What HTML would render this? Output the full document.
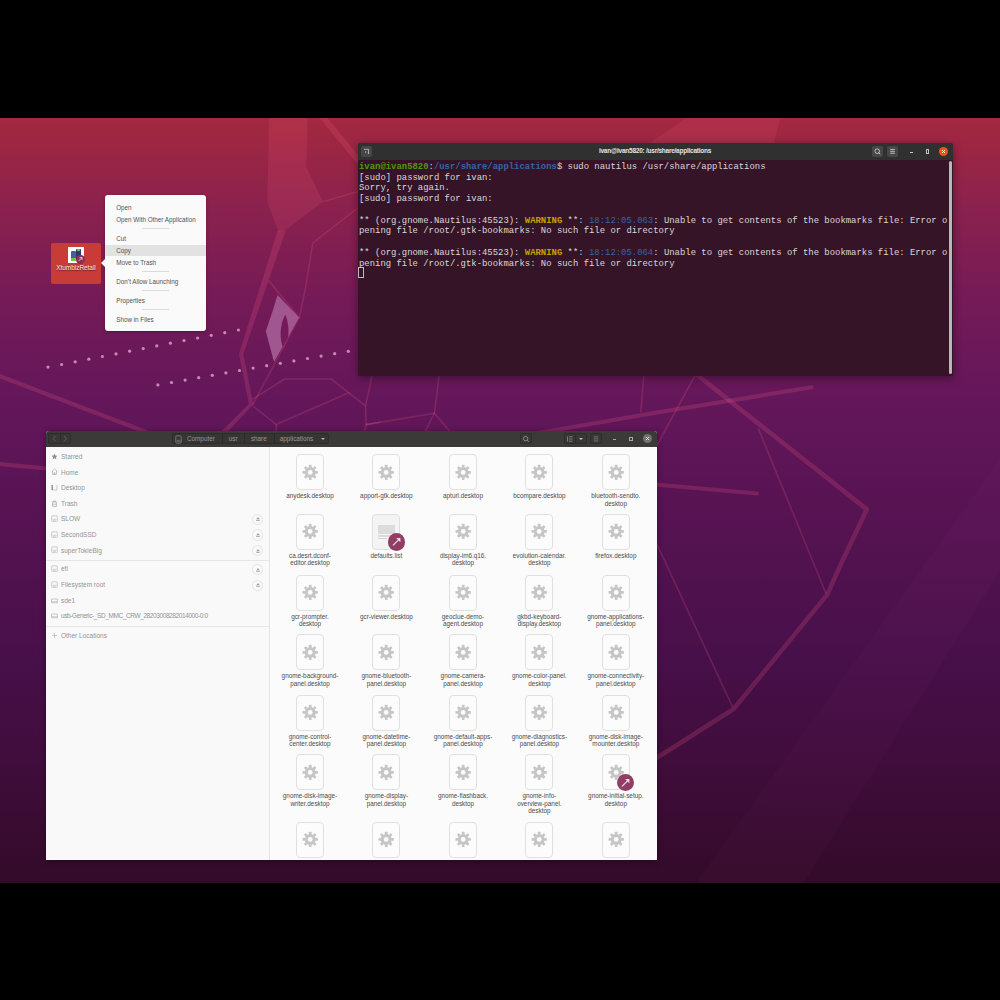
<!DOCTYPE html>
<html><head><meta charset="utf-8">
<style>
html,body{margin:0;padding:0;width:1000px;height:1000px;overflow:hidden;background:#000;}
*{box-sizing:border-box;}
body{font-family:"Liberation Sans",sans-serif;position:relative;}
.abs{position:absolute;}
#desk{position:absolute;left:0;top:118px;width:1000px;height:765px;overflow:hidden;
background:linear-gradient(180deg,#a4283f 0px,#8c224d 84px,#741a57 184px,#63175a 284px,#581353 384px,#48104a 534px,#440e43 584px,#400d3c 644px,#340b2a 754px,#330a29 765px);}
#wall{position:absolute;left:0;top:0;}
/* terminal */
#term{position:absolute;left:358px;top:143px;width:595px;height:233px;background:#361428;border-radius:3px 3px 0 0;overflow:hidden;box-shadow:0 2px 8px rgba(0,0,0,.4);}
#term .hb{position:absolute;left:0;top:0;width:595px;height:17px;background:#303030;}
#term pre{position:absolute;left:1px;top:19.0px;margin:0;font-family:"Liberation Mono",monospace;font-size:9.6px;line-height:10.73px;color:#d8d8d8;white-space:pre;transform:scaleX(0.929);transform-origin:0 0;}
.g{color:#4e9a06;font-weight:bold}.b{color:#3465a4;font-weight:bold}.y{color:#c4a000;font-weight:bold}.t{color:#3465a4}
/* context menu */
#menu{position:absolute;left:105px;top:195px;width:101px;height:136px;background:#fafafa;border-radius:3px;box-shadow:0 1px 3px rgba(0,0,0,.25);font-size:6.3px;color:#525252;}
#menu .it{position:absolute;left:11.2px;white-space:nowrap;}
#menu .sep{position:absolute;left:37px;width:27px;height:1px;background:#dcdcdc;}
/* fm */
#fm{position:absolute;left:46px;top:431px;width:611px;height:429px;background:#fbfbfb;border-radius:3px 3px 0 0;overflow:hidden;box-shadow:0 1px 6px rgba(0,0,0,.35);}
#fm .hb{position:absolute;left:0;top:0;width:611px;height:16px;background:#3c3a39;}
#side{position:absolute;left:0;top:16px;width:224px;height:413px;background:#f9f9f9;border-right:1px solid #e3e3e3;font-size:6.5px;color:#8a8a8a;}
.si{position:absolute;left:15px;white-space:nowrap;font-size:6.5px;line-height:8px;color:#939393;}
.lab{position:absolute;font-size:6.35px;line-height:7.2px;color:#4c4c4c;text-align:center;width:76px;}
.page{position:absolute;width:28px;height:36px;border:0.8px solid #e0e0e0;border-radius:4px;background:#fcfcfc;}
</style></head><body>
<div id="desk">
<svg id="wall" width="1000" height="765" viewBox="0 118 1000 765"><polygon points="1000.0,459.0 1000.0,571.0 803.0,884.0 695.0,884.0" fill="rgba(255,120,220,0.022)"/><polygon points="269.2,118.0 307.6,118.0 306.3,167.0 323.0,201.6 285.9,229.8 278.8,232.4 267.3,201.6" fill="rgba(240,90,120,0.17)"/><polygon points="686.0,118.0 780.0,118.0 774.0,143.0 650.0,143.0" fill="rgba(240,90,120,0.16)"/><polyline points="321.8,116.0 359.0,161.0" fill="none" stroke="rgba(240,90,120,0.2)" stroke-width="6.00" stroke-linejoin="round" stroke-linecap="round"/><polyline points="323.0,201.6 360.0,191.0" fill="none" stroke="rgba(243,90,134,0.21)" stroke-width="1.50" stroke-linejoin="round" stroke-linecap="round"/><polyline points="360.0,206.0 312.8,243.2 306.0,285.0 299.5,317.0" fill="none" stroke="rgba(243,90,134,0.21)" stroke-width="1.50" stroke-linejoin="round" stroke-linecap="round"/><polygon points="277.7,230.5 285.8,230.5 243.3,354.0 253.4,404.3 229.8,429.6 213.8,443.5 210.8,440.5 226.4,426.6 248.9,403.7 239.0,354.0" fill="rgba(243,90,134,0.21)"/><polygon points="277.5,294.9 299.1,317.4 274.0,362.0 265.8,331.2 273.0,310.0" fill="#a0568f"/><path d="M285.3,314.5 C279.5,325 279,340 284,350 C289.5,341 290,326 285.3,314.5 Z" fill="#731a5b"/><polyline points="268.8,280.8 299.1,317.4" fill="none" stroke="rgba(243,90,134,0.21)" stroke-width="1.60" stroke-linejoin="round" stroke-linecap="round"/><polyline points="299.1,317.4 271.4,370.0 253.0,404.0" fill="none" stroke="rgba(243,90,134,0.21)" stroke-width="1.60" stroke-linejoin="round" stroke-linecap="round"/><polyline points="253.0,399.0 284.6,379.0 331.4,379.0 348.8,392.8 365.6,406.0 372.2,375.0" fill="none" stroke="rgba(243,90,134,0.21)" stroke-width="1.60" stroke-linejoin="round" stroke-linecap="round"/><polyline points="253.0,406.0 276.2,424.6 348.8,392.8" fill="none" stroke="rgba(243,90,134,0.21)" stroke-width="1.60" stroke-linejoin="round" stroke-linecap="round"/><polyline points="276.2,424.6 276.2,432.0" fill="none" stroke="rgba(243,90,134,0.21)" stroke-width="1.60" stroke-linejoin="round" stroke-linecap="round"/><polyline points="365.6,406.0 366.2,424.6 380.0,422.2" fill="none" stroke="rgba(243,90,134,0.21)" stroke-width="1.60" stroke-linejoin="round" stroke-linecap="round"/><polyline points="366.2,424.6 364.4,432.0" fill="none" stroke="rgba(243,90,134,0.21)" stroke-width="1.60" stroke-linejoin="round" stroke-linecap="round"/><polyline points="366.2,424.6 434.4,413.2 439.2,375.0" fill="none" stroke="rgba(243,90,134,0.21)" stroke-width="1.60" stroke-linejoin="round" stroke-linecap="round"/><polyline points="434.4,413.2 424.8,432.0" fill="none" stroke="rgba(243,90,134,0.21)" stroke-width="1.60" stroke-linejoin="round" stroke-linecap="round"/><polyline points="434.4,413.2 450.4,432.0" fill="none" stroke="rgba(243,90,134,0.21)" stroke-width="1.60" stroke-linejoin="round" stroke-linecap="round"/><polyline points="644.0,375.0 640.8,411.6" fill="none" stroke="rgba(243,90,134,0.21)" stroke-width="1.60" stroke-linejoin="round" stroke-linecap="round"/><polyline points="538.4,433.0 660.0,412.0 811.6,387.3" fill="none" stroke="rgba(243,90,134,0.21)" stroke-width="4.20" stroke-linejoin="round" stroke-linecap="round"/><polyline points="-2.0,375.5 146.0,432.0" fill="none" stroke="rgba(243,90,134,0.21)" stroke-width="4.20" stroke-linejoin="round" stroke-linecap="round"/><polyline points="-2.0,464.0 47.0,468.5" fill="none" stroke="rgba(243,90,134,0.21)" stroke-width="4.20" stroke-linejoin="round" stroke-linecap="round"/><polyline points="695.9,374.0 866.8,509.4 842.8,560.0 827.2,594.6 733.6,709.0 655.0,759.0" fill="none" stroke="rgba(243,90,134,0.21)" stroke-width="4.60" stroke-linejoin="round" stroke-linecap="round"/><polyline points="695.9,374.0 656.0,447.0" fill="none" stroke="rgba(243,90,134,0.21)" stroke-width="1.60" stroke-linejoin="round" stroke-linecap="round"/><polyline points="758.3,428.5 825.9,593.3" fill="none" stroke="rgba(243,90,134,0.21)" stroke-width="1.60" stroke-linejoin="round" stroke-linecap="round"/><polyline points="655.0,540.0 732.3,706.4" fill="none" stroke="rgba(243,90,134,0.21)" stroke-width="1.60" stroke-linejoin="round" stroke-linecap="round"/><polyline points="655.0,484.4 757.0,493.5" fill="none" stroke="rgba(243,90,134,0.21)" stroke-width="4.00" stroke-linejoin="round" stroke-linecap="round"/><circle cx="48.0" cy="367.1" r="1.6" fill="#c68ab6"/><circle cx="61.6" cy="364.5" r="1.6" fill="#c68ab6"/><circle cx="75.2" cy="361.8" r="1.6" fill="#c68ab6"/><circle cx="88.8" cy="359.2" r="1.6" fill="#c68ab6"/><circle cx="102.4" cy="356.5" r="1.6" fill="#c68ab6"/><circle cx="116.0" cy="353.9" r="1.6" fill="#c68ab6"/><circle cx="129.6" cy="351.2" r="1.6" fill="#c68ab6"/><circle cx="143.2" cy="348.6" r="1.6" fill="#c68ab6"/><circle cx="156.8" cy="345.9" r="1.6" fill="#c68ab6"/><circle cx="170.4" cy="343.2" r="1.6" fill="#c68ab6"/><circle cx="184.0" cy="340.6" r="1.6" fill="#c68ab6"/><circle cx="197.6" cy="338.0" r="1.6" fill="#c68ab6"/><circle cx="211.2" cy="335.3" r="1.6" fill="#c68ab6"/><circle cx="224.8" cy="332.7" r="1.6" fill="#c68ab6"/><circle cx="238.4" cy="330.0" r="1.6" fill="#c68ab6"/><circle cx="157.9" cy="384.9" r="1.6" fill="#c68ab6"/><circle cx="171.5" cy="382.5" r="1.6" fill="#c68ab6"/><circle cx="185.1" cy="380.1" r="1.6" fill="#c68ab6"/><circle cx="198.7" cy="377.7" r="1.6" fill="#c68ab6"/><circle cx="212.3" cy="375.3" r="1.6" fill="#c68ab6"/><circle cx="225.9" cy="372.9" r="1.6" fill="#c68ab6"/><circle cx="239.5" cy="370.5" r="1.6" fill="#c68ab6"/><circle cx="253.1" cy="368.1" r="1.6" fill="#c68ab6"/><circle cx="266.7" cy="365.7" r="1.6" fill="#c68ab6"/><circle cx="280.3" cy="363.3" r="1.6" fill="#c68ab6"/><circle cx="293.9" cy="360.9" r="1.6" fill="#c68ab6"/><circle cx="307.5" cy="358.5" r="1.6" fill="#c68ab6"/><circle cx="321.1" cy="356.1" r="1.6" fill="#c68ab6"/><circle cx="334.7" cy="353.7" r="1.6" fill="#c68ab6"/><circle cx="348.3" cy="351.3" r="1.6" fill="#c68ab6"/></svg>
</div>

<!-- terminal -->
<div id="term">
<div class="hb">
  <div class="abs" style="left:3px;top:3px;width:11px;height:11px;border-radius:2px;background:#474747;"></div>
  <svg class="abs" style="left:3px;top:3px" width="11" height="11" viewBox="0 0 11 11"><path d="M3 3.3 H7.5 V7.6" stroke="#c8c8c8" stroke-width="0.8" fill="none"/><path d="M7.5 8 L6.7 6.8 H8.3 Z" fill="#c8c8c8"/><path d="M4.2 5 L5.6 6 L4.2 7 Z" fill="#bdbdbd"/></svg>
  <div class="abs" style="left:240px;top:4.4px;width:114px;text-align:center;font-size:6.5px;font-weight:bold;color:#e4e4e4;white-space:nowrap;letter-spacing:-0.25px;">ivan@ivan5820: /usr/share/applications</div>
  <div class="abs" style="left:514px;top:3px;width:11px;height:11px;border-radius:2px;background:#474747;"></div>
  <svg class="abs" style="left:514px;top:3px" width="11" height="11" viewBox="0 0 11 11"><circle cx="5.2" cy="5.2" r="2.3" stroke="#c8c8c8" stroke-width="0.9" fill="none"/><path d="M6.8 6.8 L8.3 8.3" stroke="#c8c8c8" stroke-width="1"/></svg>
  <div class="abs" style="left:529px;top:3px;width:11px;height:11px;border-radius:2px;background:#474747;"></div>
  <svg class="abs" style="left:529px;top:3px" width="11" height="11" viewBox="0 0 11 11"><path d="M3.2 3.4 H7.8 M3.2 5.3 H7.8 M3.2 7.2 H7.8" stroke="#c0c0c0" stroke-width="1"/></svg>
  <div class="abs" style="left:551.5px;top:9px;width:3.5px;height:0.9px;background:#d0d0d0;"></div>
  <div class="abs" style="left:567.5px;top:6.3px;width:3.8px;height:4.4px;border:0.8px solid #c8c8c8;border-radius:0.6px;"></div>
  <div class="abs" style="left:581px;top:4px;width:9px;height:9px;border-radius:50%;background:#e95420;"></div>
  <svg class="abs" style="left:581px;top:4px" width="9" height="9" viewBox="0 0 9 9"><path d="M3 3 L6 6 M6 3 L3 6" stroke="#fff" stroke-width="0.9"/></svg>
 </div>
 <div class="abs" style="left:591px;top:18px;width:2.5px;height:213px;border-radius:1.5px;background:#b8b8b8;"></div>
 <div class="abs" style="left:0.3px;top:124.2px;width:6px;height:11px;border:0.9px solid #bdbdbd;"></div>
<pre><span class="g">ivan@ivan5820</span>:<span class="b">/usr/share/applications</span>$ sudo nautilus /usr/share/applications
[sudo] password for ivan:
Sorry, try again.
[sudo] password for ivan:

** (org.gnome.Nautilus:45523): <span class="y">WARNING</span> **: <span class="t">18:12:05.063</span>: Unable to get contents of the bookmarks file: Error o
pening file /root/.gtk-bookmarks: No such file or directory

** (org.gnome.Nautilus:45523): <span class="y">WARNING</span> **: <span class="t">18:12:05.064</span>: Unable to get contents of the bookmarks file: Error o
pening file /root/.gtk-bookmarks: No such file or directory
</pre>
</div>

<!-- desktop icon -->
<div class="abs" style="left:51px;top:243px;width:50px;height:41px;background:#c93b37;border-radius:2px;">
 <div class="abs" style="left:16.5px;top:4px;width:16px;height:15.5px;background:#fff;"></div>
 <div class="abs" style="left:20px;top:8px;width:5px;height:9px;background:#4a5aa8;border-radius:1px 1px 0 0;"></div>
 <div class="abs" style="left:20px;top:15px;width:5px;height:2.5px;background:#6fc24a;"></div>
 <div class="abs" style="left:25px;top:6px;width:4.5px;height:11px;background:#2d3a6a;border-radius:1px 1px 0 0;"></div>
 <div class="abs" style="left:25.5px;top:6px;width:3.5px;height:2px;background:#5ac34a;"></div>
 <div class="abs" style="left:25.4px;top:12.3px;width:8.6px;height:8.6px;border-radius:50%;background:#8c2f58;"><svg class="abs" style="left:0;top:0" width="8.6" height="8.6" viewBox="0 0 10 10"><path d="M3 7 L7 3 M4 3 H7 V6" stroke="#e8d0dc" stroke-width="1" fill="none"/></svg></div>
 <div class="abs" style="left:0;top:21.4px;width:50px;text-align:center;font-size:6.5px;color:#f4ecec;letter-spacing:-0.05px;text-shadow:0 0.5px 1px rgba(0,0,0,.6);white-space:nowrap;">XtumbizRetail</div>
</div>

<!-- context menu -->
<div id="menu">
 <div class="it" style="top:8.7px">Open</div>
 <div class="it" style="top:20.7px">Open With Other Application</div>
 <div class="sep" style="top:32.7px"></div>
 <div class="abs" style="left:0;top:49.5px;width:101px;height:11.5px;background:#e2e2e2"></div>
 <div class="it" style="top:39.7px">Cut</div>
 <div class="it" style="top:51.7px">Copy</div>
 <div class="it" style="top:63.7px">Move to Trash</div>
 <div class="sep" style="top:75.7px"></div>
 <div class="it" style="top:82.5px">Don’t Allow Launching</div>
 <div class="sep" style="top:94.7px"></div>
 <div class="it" style="top:101.5px">Properties</div>
 <div class="sep" style="top:114.4px"></div>
 <div class="it" style="top:121.0px">Show in Files</div>
 <div class="abs" style="left:-4px;top:64px;width:0;height:0;border-top:4px solid transparent;border-bottom:4px solid transparent;border-right:4px solid #fafafa"></div>
</div>

<!-- file manager -->
<div id="fm">
<div class="hb">
<div class="abs" style="left:2.4px;top:2px;width:22.8px;height:11.2px;border:1px solid #2f2d2c;border-radius:2px;background:#393735;"></div>
<div class="abs" style="left:14px;top:2.5px;width:1px;height:10.2px;background:#2f2d2c;"></div>
<svg class="abs" style="left:2.4px;top:2px" width="23" height="11" viewBox="0 0 23 11"><path d="M7.3 3 L5.3 5.6 L7.3 8.2 M16.3 3 L18.3 5.6 L16.3 8.2" stroke="#6a6765" stroke-width="0.8" fill="none"/></svg>
<div class="abs" style="left:125.5px;top:1.8px;width:157.5px;height:11.4px;border:1px solid #2f2d2c;border-radius:2px;background:#373533;"></div>
<div class="abs" style="left:176.0px;top:2.3px;width:1px;height:10.4px;background:#2c2a29;"></div>
<div class="abs" style="left:198.0px;top:2.3px;width:1px;height:10.4px;background:#2c2a29;"></div>
<div class="abs" style="left:227.8px;top:2.3px;width:1px;height:10.4px;background:#2c2a29;"></div>
<svg class="abs" style="left:128.5px;top:3.5px" width="7" height="9" viewBox="0 0 7 9"><rect x="0.8" y="0.8" width="5.4" height="7.4" rx="1" stroke="#8e8b89" stroke-width="0.7" fill="none"/><path d="M1.6 5.3 H5.4 M1.6 6.7 H5.4" stroke="#8e8b89" stroke-width="0.6"/></svg>
<div class="abs" style="font-size:6.33px;color:#9a9795;white-space:nowrap;top:4.3px;left:141.0px">Computer</div>
<div class="abs" style="font-size:6.33px;color:#9a9795;white-space:nowrap;top:4.3px;left:182.8px">usr</div>
<div class="abs" style="font-size:6.33px;color:#9a9795;white-space:nowrap;top:4.3px;left:204.9px">share</div>
<div class="abs" style="font-size:6.33px;color:#9a9795;white-space:nowrap;top:4.3px;left:233.8px">applications</div>
<div class="abs" style="left:274.9px;top:6.5px;width:0;height:0;border-left:2.3px solid transparent;border-right:2.3px solid transparent;border-top:2.5px solid #b9b6b4;"></div>
<div class="abs" style="left:473.7px;top:1.5px;width:12px;height:11.7px;border:1px solid #2f2d2c;border-radius:2px;background:#393735;"></div>
<svg class="abs" style="left:473.7px;top:1.5px" width="12" height="12" viewBox="0 0 12 12"><circle cx="5.6" cy="5.6" r="2.2" stroke="#8f8c8a" stroke-width="0.9" fill="none"/><path d="M7.2 7.2 L8.8 8.8" stroke="#8f8c8a" stroke-width="1"/></svg>
<div class="abs" style="left:518.0px;top:1.5px;width:23.2px;height:11.7px;border:1px solid #2f2d2c;border-radius:2px;background:#393735;"></div>
<div class="abs" style="left:529.2px;top:2px;width:1px;height:10.7px;background:#2f2d2c;"></div>
<svg class="abs" style="left:518.0px;top:1.5px" width="12" height="12" viewBox="0 0 12 12"><path d="M3.5 3.5 V8.5 M5 3.8 H8.5 M5 6 H8.5 M5 8.2 H8.5" stroke="#8f8c8a" stroke-width="0.8"/></svg>
<div class="abs" style="left:533.1px;top:6.5px;width:0;height:0;border-left:2.3px solid transparent;border-right:2.3px solid transparent;border-top:2.5px solid #c4c1bf;"></div>
<div class="abs" style="left:544.2px;top:1.5px;width:12px;height:11.7px;border:1px solid #2f2d2c;border-radius:2px;background:#393735;"></div>
<svg class="abs" style="left:544.2px;top:1.5px" width="12" height="12" viewBox="0 0 12 12"><path d="M3.8 3.9 H8.2 M3.8 5.9 H8.2 M3.8 7.9 H8.2" stroke="#8f8c8a" stroke-width="0.7"/></svg>
<div class="abs" style="left:566.7px;top:8px;width:3px;height:0.9px;background:#a9a6a4;"></div>
<div class="abs" style="left:582.6px;top:5.5px;width:4.2px;height:4.2px;border:0.8px solid #a9a6a4;"></div>
<div class="abs" style="left:596.7px;top:3.0px;width:9px;height:9px;border-radius:50%;background:#74716f;"></div>
<svg class="abs" style="left:596.7px;top:3.0px" width="9" height="9" viewBox="0 0 9 9"><path d="M3 3 L6 6 M6 3 L3 6" stroke="#e6e4e2" stroke-width="0.9"/></svg>
</div>
<div id="side"></div>
<div class="si" style="top:21.90px">Starred</div>
<svg class="abs" style="left:5.0px;top:21.70px" width="7" height="7" viewBox="0 0 7 7"><path d="M3.5 0.6 L4.4 2.6 L6.5 2.8 L4.9 4.2 L5.4 6.3 L3.5 5.2 L1.6 6.3 L2.1 4.2 L0.5 2.8 L2.6 2.6 Z" fill="#8f8f8f"/></svg>
<div class="si" style="top:37.50px">Home</div>
<svg class="abs" style="left:5.0px;top:37.30px" width="7" height="7" viewBox="0 0 7 7"><path d="M0.8 3.5 L3.5 0.9 L6.2 3.5 M1.5 3 V6.4 H5.5 V3 M3 6.4 V4.8 H4 V6.4" stroke="#a0a0a0" stroke-width="0.6" fill="none"/></svg>
<div class="si" style="top:53.10px">Desktop</div>
<svg class="abs" style="left:5.0px;top:52.90px" width="7" height="7" viewBox="0 0 7 7"><path d="M1 1 V6 H6 V1" stroke="#a8a8a8" stroke-width="0.6" fill="none"/><rect x="0.6" y="1" width="1.2" height="5" fill="#8a8a8a"/></svg>
<div class="si" style="top:68.70px">Trash</div>
<svg class="abs" style="left:5.0px;top:68.50px" width="7" height="7" viewBox="0 0 7 7"><path d="M1.2 2 H5.8 M2.5 2 V1 H4.5 V2 M1.6 2.3 V6.5 H5.4 V2.3 M1.6 4.2 H5.4" stroke="#9a9a9a" stroke-width="0.6" fill="none"/></svg>
<div class="si" style="top:84.30px">SLOW</div>
<svg class="abs" style="left:5.0px;top:84.10px" width="7" height="7" viewBox="0 0 7 7"><rect x="0.7" y="0.8" width="5.6" height="5.8" rx="0.8" stroke="#b0b0b0" stroke-width="0.6" fill="none"/><path d="M1.3 4.3 H5.7 M2 5.4 H5" stroke="#b0b0b0" stroke-width="0.5"/></svg>
<div class="abs" style="left:205.9px;top:82.7px;width:11.4px;height:11.4px;border-radius:50%;border:0.7px solid #e4e4e4;background:#fafafa;"></div>
<svg class="abs" style="left:208.6px;top:85.4px" width="6" height="6" viewBox="0 0 6 6"><path d="M3 0.9 L4.8 3.3 H1.2 Z" fill="#a0a0a0"/><rect x="1.2" y="3.9" width="3.6" height="0.9" fill="#a0a0a0"/></svg>
<div class="si" style="top:99.90px">SecondSSD</div>
<svg class="abs" style="left:5.0px;top:99.70px" width="7" height="7" viewBox="0 0 7 7"><rect x="0.7" y="0.8" width="5.6" height="5.8" rx="0.8" stroke="#b0b0b0" stroke-width="0.6" fill="none"/><path d="M1.3 4.3 H5.7 M2 5.4 H5" stroke="#b0b0b0" stroke-width="0.5"/></svg>
<div class="abs" style="left:205.9px;top:98.3px;width:11.4px;height:11.4px;border-radius:50%;border:0.7px solid #e4e4e4;background:#fafafa;"></div>
<svg class="abs" style="left:208.6px;top:101.0px" width="6" height="6" viewBox="0 0 6 6"><path d="M3 0.9 L4.8 3.3 H1.2 Z" fill="#a0a0a0"/><rect x="1.2" y="3.9" width="3.6" height="0.9" fill="#a0a0a0"/></svg>
<div class="si" style="top:115.50px">superTokieBig</div>
<svg class="abs" style="left:5.0px;top:115.30px" width="7" height="7" viewBox="0 0 7 7"><rect x="0.7" y="0.8" width="5.6" height="5.8" rx="0.8" stroke="#b0b0b0" stroke-width="0.6" fill="none"/><path d="M1.3 4.3 H5.7 M2 5.4 H5" stroke="#b0b0b0" stroke-width="0.5"/></svg>
<div class="abs" style="left:205.9px;top:113.9px;width:11.4px;height:11.4px;border-radius:50%;border:0.7px solid #e4e4e4;background:#fafafa;"></div>
<svg class="abs" style="left:208.6px;top:116.6px" width="6" height="6" viewBox="0 0 6 6"><path d="M3 0.9 L4.8 3.3 H1.2 Z" fill="#a0a0a0"/><rect x="1.2" y="3.9" width="3.6" height="0.9" fill="#a0a0a0"/></svg>
<div class="si" style="top:134.40px">efi</div>
<svg class="abs" style="left:5.0px;top:134.20px" width="7" height="7" viewBox="0 0 7 7"><rect x="0.7" y="0.8" width="5.6" height="5.8" rx="0.8" stroke="#b0b0b0" stroke-width="0.6" fill="none"/><path d="M1.3 4.3 H5.7 M2 5.4 H5" stroke="#b0b0b0" stroke-width="0.5"/></svg>
<div class="abs" style="left:205.9px;top:132.8px;width:11.4px;height:11.4px;border-radius:50%;border:0.7px solid #e4e4e4;background:#fafafa;"></div>
<svg class="abs" style="left:208.6px;top:135.5px" width="6" height="6" viewBox="0 0 6 6"><path d="M3 0.9 L4.8 3.3 H1.2 Z" fill="#a0a0a0"/><rect x="1.2" y="3.9" width="3.6" height="0.9" fill="#a0a0a0"/></svg>
<div class="si" style="top:150.20px">Filesystem root</div>
<svg class="abs" style="left:5.0px;top:150.00px" width="7" height="7" viewBox="0 0 7 7"><rect x="0.7" y="0.8" width="5.6" height="5.8" rx="0.8" stroke="#b0b0b0" stroke-width="0.6" fill="none"/><path d="M1.3 4.3 H5.7 M2 5.4 H5" stroke="#b0b0b0" stroke-width="0.5"/></svg>
<div class="abs" style="left:205.9px;top:148.6px;width:11.4px;height:11.4px;border-radius:50%;border:0.7px solid #e4e4e4;background:#fafafa;"></div>
<svg class="abs" style="left:208.6px;top:151.3px" width="6" height="6" viewBox="0 0 6 6"><path d="M3 0.9 L4.8 3.3 H1.2 Z" fill="#a0a0a0"/><rect x="1.2" y="3.9" width="3.6" height="0.9" fill="#a0a0a0"/></svg>
<div class="si" style="top:165.80px">sde1</div>
<svg class="abs" style="left:5.0px;top:165.60px" width="7" height="7" viewBox="0 0 7 7"><path d="M0.6 2 H6.4 V5.8 H0.6 Z M0.6 4.8 H6.4" stroke="#a8a8a8" stroke-width="0.6" fill="none"/></svg>
<div class="si" style="top:181.30px;letter-spacing:-0.4px">usb-Generic-_SD_MMC_CRW_28203008282014000-0:0</div>
<svg class="abs" style="left:5.0px;top:181.10px" width="7" height="7" viewBox="0 0 7 7"><path d="M0.6 2 H6.4 V5.8 H0.6 Z M0.6 4.8 H6.4" stroke="#a8a8a8" stroke-width="0.6" fill="none"/></svg>
<div class="si" style="top:201.10px">Other Locations</div>
<svg class="abs" style="left:5.0px;top:200.90px" width="7" height="7" viewBox="0 0 7 7"><path d="M3.5 1 V6 M1 3.5 H6" stroke="#a8a8a8" stroke-width="0.6"/></svg>
<div class="abs" style="left:0;top:129.2px;width:224px;height:1px;background:#e6e6e6;"></div>
<div class="abs" style="left:0;top:195.2px;width:224px;height:1px;background:#e6e6e6;"></div>
<div class="page" style="left:249.8px;top:23.3px"><svg class="abs" style="left:-0.8px;top:-0.8px" width="28" height="35" viewBox="0 0 28 35"><g transform="translate(14.2,17.4)" fill="#c6c6c6"><circle r="5.4"/><rect x="-1.35" y="-7.7" width="2.7" height="4" rx="0.6" transform="rotate(0)"/><rect x="-1.35" y="-7.7" width="2.7" height="4" rx="0.6" transform="rotate(45)"/><rect x="-1.35" y="-7.7" width="2.7" height="4" rx="0.6" transform="rotate(90)"/><rect x="-1.35" y="-7.7" width="2.7" height="4" rx="0.6" transform="rotate(135)"/><rect x="-1.35" y="-7.7" width="2.7" height="4" rx="0.6" transform="rotate(180)"/><rect x="-1.35" y="-7.7" width="2.7" height="4" rx="0.6" transform="rotate(225)"/><rect x="-1.35" y="-7.7" width="2.7" height="4" rx="0.6" transform="rotate(270)"/><rect x="-1.35" y="-7.7" width="2.7" height="4" rx="0.6" transform="rotate(315)"/><circle r="2.4" fill="#fcfcfc"/></g></svg></div>
<div class="lab" style="left:226.0px;top:61.3px">anydesk.desktop</div>
<div class="page" style="left:326.2px;top:23.3px"><svg class="abs" style="left:-0.8px;top:-0.8px" width="28" height="35" viewBox="0 0 28 35"><g transform="translate(14.2,17.4)" fill="#c6c6c6"><circle r="5.4"/><rect x="-1.35" y="-7.7" width="2.7" height="4" rx="0.6" transform="rotate(0)"/><rect x="-1.35" y="-7.7" width="2.7" height="4" rx="0.6" transform="rotate(45)"/><rect x="-1.35" y="-7.7" width="2.7" height="4" rx="0.6" transform="rotate(90)"/><rect x="-1.35" y="-7.7" width="2.7" height="4" rx="0.6" transform="rotate(135)"/><rect x="-1.35" y="-7.7" width="2.7" height="4" rx="0.6" transform="rotate(180)"/><rect x="-1.35" y="-7.7" width="2.7" height="4" rx="0.6" transform="rotate(225)"/><rect x="-1.35" y="-7.7" width="2.7" height="4" rx="0.6" transform="rotate(270)"/><rect x="-1.35" y="-7.7" width="2.7" height="4" rx="0.6" transform="rotate(315)"/><circle r="2.4" fill="#fcfcfc"/></g></svg></div>
<div class="lab" style="left:302.4px;top:61.3px">apport-gtk.desktop</div>
<div class="page" style="left:402.8px;top:23.3px"><svg class="abs" style="left:-0.8px;top:-0.8px" width="28" height="35" viewBox="0 0 28 35"><g transform="translate(14.2,17.4)" fill="#c6c6c6"><circle r="5.4"/><rect x="-1.35" y="-7.7" width="2.7" height="4" rx="0.6" transform="rotate(0)"/><rect x="-1.35" y="-7.7" width="2.7" height="4" rx="0.6" transform="rotate(45)"/><rect x="-1.35" y="-7.7" width="2.7" height="4" rx="0.6" transform="rotate(90)"/><rect x="-1.35" y="-7.7" width="2.7" height="4" rx="0.6" transform="rotate(135)"/><rect x="-1.35" y="-7.7" width="2.7" height="4" rx="0.6" transform="rotate(180)"/><rect x="-1.35" y="-7.7" width="2.7" height="4" rx="0.6" transform="rotate(225)"/><rect x="-1.35" y="-7.7" width="2.7" height="4" rx="0.6" transform="rotate(270)"/><rect x="-1.35" y="-7.7" width="2.7" height="4" rx="0.6" transform="rotate(315)"/><circle r="2.4" fill="#fcfcfc"/></g></svg></div>
<div class="lab" style="left:379.0px;top:61.3px">apturl.desktop</div>
<div class="page" style="left:479.2px;top:23.3px"><svg class="abs" style="left:-0.8px;top:-0.8px" width="28" height="35" viewBox="0 0 28 35"><g transform="translate(14.2,17.4)" fill="#c6c6c6"><circle r="5.4"/><rect x="-1.35" y="-7.7" width="2.7" height="4" rx="0.6" transform="rotate(0)"/><rect x="-1.35" y="-7.7" width="2.7" height="4" rx="0.6" transform="rotate(45)"/><rect x="-1.35" y="-7.7" width="2.7" height="4" rx="0.6" transform="rotate(90)"/><rect x="-1.35" y="-7.7" width="2.7" height="4" rx="0.6" transform="rotate(135)"/><rect x="-1.35" y="-7.7" width="2.7" height="4" rx="0.6" transform="rotate(180)"/><rect x="-1.35" y="-7.7" width="2.7" height="4" rx="0.6" transform="rotate(225)"/><rect x="-1.35" y="-7.7" width="2.7" height="4" rx="0.6" transform="rotate(270)"/><rect x="-1.35" y="-7.7" width="2.7" height="4" rx="0.6" transform="rotate(315)"/><circle r="2.4" fill="#fcfcfc"/></g></svg></div>
<div class="lab" style="left:455.4px;top:61.3px">bcompare.desktop</div>
<div class="page" style="left:555.6px;top:23.3px"><svg class="abs" style="left:-0.8px;top:-0.8px" width="28" height="35" viewBox="0 0 28 35"><g transform="translate(14.2,17.4)" fill="#c6c6c6"><circle r="5.4"/><rect x="-1.35" y="-7.7" width="2.7" height="4" rx="0.6" transform="rotate(0)"/><rect x="-1.35" y="-7.7" width="2.7" height="4" rx="0.6" transform="rotate(45)"/><rect x="-1.35" y="-7.7" width="2.7" height="4" rx="0.6" transform="rotate(90)"/><rect x="-1.35" y="-7.7" width="2.7" height="4" rx="0.6" transform="rotate(135)"/><rect x="-1.35" y="-7.7" width="2.7" height="4" rx="0.6" transform="rotate(180)"/><rect x="-1.35" y="-7.7" width="2.7" height="4" rx="0.6" transform="rotate(225)"/><rect x="-1.35" y="-7.7" width="2.7" height="4" rx="0.6" transform="rotate(270)"/><rect x="-1.35" y="-7.7" width="2.7" height="4" rx="0.6" transform="rotate(315)"/><circle r="2.4" fill="#fcfcfc"/></g></svg></div>
<div class="lab" style="left:531.8px;top:61.3px">bluetooth-sendto.<br>desktop</div>
<div class="page" style="left:249.8px;top:83.0px"><svg class="abs" style="left:-0.8px;top:-0.8px" width="28" height="35" viewBox="0 0 28 35"><g transform="translate(14.2,17.4)" fill="#c6c6c6"><circle r="5.4"/><rect x="-1.35" y="-7.7" width="2.7" height="4" rx="0.6" transform="rotate(0)"/><rect x="-1.35" y="-7.7" width="2.7" height="4" rx="0.6" transform="rotate(45)"/><rect x="-1.35" y="-7.7" width="2.7" height="4" rx="0.6" transform="rotate(90)"/><rect x="-1.35" y="-7.7" width="2.7" height="4" rx="0.6" transform="rotate(135)"/><rect x="-1.35" y="-7.7" width="2.7" height="4" rx="0.6" transform="rotate(180)"/><rect x="-1.35" y="-7.7" width="2.7" height="4" rx="0.6" transform="rotate(225)"/><rect x="-1.35" y="-7.7" width="2.7" height="4" rx="0.6" transform="rotate(270)"/><rect x="-1.35" y="-7.7" width="2.7" height="4" rx="0.6" transform="rotate(315)"/><circle r="2.4" fill="#fcfcfc"/></g></svg></div>
<div class="lab" style="left:226.0px;top:121.0px">ca.desrt.dconf-<br>editor.desktop</div>
<div class="page" style="left:326.2px;top:83.0px;background:#f4f4f4;"><div class="abs" style="left:5px;top:10px;width:17px;height:8.5px;background:#dcdcdc;"></div><div class="abs" style="left:5px;top:19.5px;width:17px;height:0.8px;background:#dcdcdc;"></div><div class="abs" style="left:5px;top:21.3px;width:17px;height:0.8px;background:#dcdcdc;"></div><div class="abs" style="left:5px;top:23.3px;width:9px;height:0.8px;background:#d4d4d4;"></div></div>
<div class="abs" style="left:341.5px;top:102.2px;width:17.4px;height:17.4px;border-radius:50%;background:#923e64;"><svg class="abs" style="left:0;top:0" width="17.4" height="17.4" viewBox="0 0 17.4 17.4"><path d="M5 12.4 L11.5 5.9" stroke="#f0dde7" stroke-width="1.2" fill="none"/><path d="M8.2 5 H12.4 V9.2 Z" fill="#f0dde7"/></svg></div>
<div class="lab" style="left:302.4px;top:121.0px">defaults.list</div>
<div class="page" style="left:402.8px;top:83.0px"><svg class="abs" style="left:-0.8px;top:-0.8px" width="28" height="35" viewBox="0 0 28 35"><g transform="translate(14.2,17.4)" fill="#c6c6c6"><circle r="5.4"/><rect x="-1.35" y="-7.7" width="2.7" height="4" rx="0.6" transform="rotate(0)"/><rect x="-1.35" y="-7.7" width="2.7" height="4" rx="0.6" transform="rotate(45)"/><rect x="-1.35" y="-7.7" width="2.7" height="4" rx="0.6" transform="rotate(90)"/><rect x="-1.35" y="-7.7" width="2.7" height="4" rx="0.6" transform="rotate(135)"/><rect x="-1.35" y="-7.7" width="2.7" height="4" rx="0.6" transform="rotate(180)"/><rect x="-1.35" y="-7.7" width="2.7" height="4" rx="0.6" transform="rotate(225)"/><rect x="-1.35" y="-7.7" width="2.7" height="4" rx="0.6" transform="rotate(270)"/><rect x="-1.35" y="-7.7" width="2.7" height="4" rx="0.6" transform="rotate(315)"/><circle r="2.4" fill="#fcfcfc"/></g></svg></div>
<div class="lab" style="left:379.0px;top:121.0px">display-im6.q16.<br>desktop</div>
<div class="page" style="left:479.2px;top:83.0px"><svg class="abs" style="left:-0.8px;top:-0.8px" width="28" height="35" viewBox="0 0 28 35"><g transform="translate(14.2,17.4)" fill="#c6c6c6"><circle r="5.4"/><rect x="-1.35" y="-7.7" width="2.7" height="4" rx="0.6" transform="rotate(0)"/><rect x="-1.35" y="-7.7" width="2.7" height="4" rx="0.6" transform="rotate(45)"/><rect x="-1.35" y="-7.7" width="2.7" height="4" rx="0.6" transform="rotate(90)"/><rect x="-1.35" y="-7.7" width="2.7" height="4" rx="0.6" transform="rotate(135)"/><rect x="-1.35" y="-7.7" width="2.7" height="4" rx="0.6" transform="rotate(180)"/><rect x="-1.35" y="-7.7" width="2.7" height="4" rx="0.6" transform="rotate(225)"/><rect x="-1.35" y="-7.7" width="2.7" height="4" rx="0.6" transform="rotate(270)"/><rect x="-1.35" y="-7.7" width="2.7" height="4" rx="0.6" transform="rotate(315)"/><circle r="2.4" fill="#fcfcfc"/></g></svg></div>
<div class="lab" style="left:455.4px;top:121.0px">evolution-calendar.<br>desktop</div>
<div class="page" style="left:555.6px;top:83.0px"><svg class="abs" style="left:-0.8px;top:-0.8px" width="28" height="35" viewBox="0 0 28 35"><g transform="translate(14.2,17.4)" fill="#c6c6c6"><circle r="5.4"/><rect x="-1.35" y="-7.7" width="2.7" height="4" rx="0.6" transform="rotate(0)"/><rect x="-1.35" y="-7.7" width="2.7" height="4" rx="0.6" transform="rotate(45)"/><rect x="-1.35" y="-7.7" width="2.7" height="4" rx="0.6" transform="rotate(90)"/><rect x="-1.35" y="-7.7" width="2.7" height="4" rx="0.6" transform="rotate(135)"/><rect x="-1.35" y="-7.7" width="2.7" height="4" rx="0.6" transform="rotate(180)"/><rect x="-1.35" y="-7.7" width="2.7" height="4" rx="0.6" transform="rotate(225)"/><rect x="-1.35" y="-7.7" width="2.7" height="4" rx="0.6" transform="rotate(270)"/><rect x="-1.35" y="-7.7" width="2.7" height="4" rx="0.6" transform="rotate(315)"/><circle r="2.4" fill="#fcfcfc"/></g></svg></div>
<div class="lab" style="left:531.8px;top:121.0px">firefox.desktop</div>
<div class="page" style="left:249.8px;top:143.8px"><svg class="abs" style="left:-0.8px;top:-0.8px" width="28" height="35" viewBox="0 0 28 35"><g transform="translate(14.2,17.4)" fill="#c6c6c6"><circle r="5.4"/><rect x="-1.35" y="-7.7" width="2.7" height="4" rx="0.6" transform="rotate(0)"/><rect x="-1.35" y="-7.7" width="2.7" height="4" rx="0.6" transform="rotate(45)"/><rect x="-1.35" y="-7.7" width="2.7" height="4" rx="0.6" transform="rotate(90)"/><rect x="-1.35" y="-7.7" width="2.7" height="4" rx="0.6" transform="rotate(135)"/><rect x="-1.35" y="-7.7" width="2.7" height="4" rx="0.6" transform="rotate(180)"/><rect x="-1.35" y="-7.7" width="2.7" height="4" rx="0.6" transform="rotate(225)"/><rect x="-1.35" y="-7.7" width="2.7" height="4" rx="0.6" transform="rotate(270)"/><rect x="-1.35" y="-7.7" width="2.7" height="4" rx="0.6" transform="rotate(315)"/><circle r="2.4" fill="#fcfcfc"/></g></svg></div>
<div class="lab" style="left:226.0px;top:181.8px">gcr-prompter.<br>desktop</div>
<div class="page" style="left:326.2px;top:143.8px"><svg class="abs" style="left:-0.8px;top:-0.8px" width="28" height="35" viewBox="0 0 28 35"><g transform="translate(14.2,17.4)" fill="#c6c6c6"><circle r="5.4"/><rect x="-1.35" y="-7.7" width="2.7" height="4" rx="0.6" transform="rotate(0)"/><rect x="-1.35" y="-7.7" width="2.7" height="4" rx="0.6" transform="rotate(45)"/><rect x="-1.35" y="-7.7" width="2.7" height="4" rx="0.6" transform="rotate(90)"/><rect x="-1.35" y="-7.7" width="2.7" height="4" rx="0.6" transform="rotate(135)"/><rect x="-1.35" y="-7.7" width="2.7" height="4" rx="0.6" transform="rotate(180)"/><rect x="-1.35" y="-7.7" width="2.7" height="4" rx="0.6" transform="rotate(225)"/><rect x="-1.35" y="-7.7" width="2.7" height="4" rx="0.6" transform="rotate(270)"/><rect x="-1.35" y="-7.7" width="2.7" height="4" rx="0.6" transform="rotate(315)"/><circle r="2.4" fill="#fcfcfc"/></g></svg></div>
<div class="lab" style="left:302.4px;top:181.8px">gcr-viewer.desktop</div>
<div class="page" style="left:402.8px;top:143.8px"><svg class="abs" style="left:-0.8px;top:-0.8px" width="28" height="35" viewBox="0 0 28 35"><g transform="translate(14.2,17.4)" fill="#c6c6c6"><circle r="5.4"/><rect x="-1.35" y="-7.7" width="2.7" height="4" rx="0.6" transform="rotate(0)"/><rect x="-1.35" y="-7.7" width="2.7" height="4" rx="0.6" transform="rotate(45)"/><rect x="-1.35" y="-7.7" width="2.7" height="4" rx="0.6" transform="rotate(90)"/><rect x="-1.35" y="-7.7" width="2.7" height="4" rx="0.6" transform="rotate(135)"/><rect x="-1.35" y="-7.7" width="2.7" height="4" rx="0.6" transform="rotate(180)"/><rect x="-1.35" y="-7.7" width="2.7" height="4" rx="0.6" transform="rotate(225)"/><rect x="-1.35" y="-7.7" width="2.7" height="4" rx="0.6" transform="rotate(270)"/><rect x="-1.35" y="-7.7" width="2.7" height="4" rx="0.6" transform="rotate(315)"/><circle r="2.4" fill="#fcfcfc"/></g></svg></div>
<div class="lab" style="left:379.0px;top:181.8px">geoclue-demo-<br>agent.desktop</div>
<div class="page" style="left:479.2px;top:143.8px"><svg class="abs" style="left:-0.8px;top:-0.8px" width="28" height="35" viewBox="0 0 28 35"><g transform="translate(14.2,17.4)" fill="#c6c6c6"><circle r="5.4"/><rect x="-1.35" y="-7.7" width="2.7" height="4" rx="0.6" transform="rotate(0)"/><rect x="-1.35" y="-7.7" width="2.7" height="4" rx="0.6" transform="rotate(45)"/><rect x="-1.35" y="-7.7" width="2.7" height="4" rx="0.6" transform="rotate(90)"/><rect x="-1.35" y="-7.7" width="2.7" height="4" rx="0.6" transform="rotate(135)"/><rect x="-1.35" y="-7.7" width="2.7" height="4" rx="0.6" transform="rotate(180)"/><rect x="-1.35" y="-7.7" width="2.7" height="4" rx="0.6" transform="rotate(225)"/><rect x="-1.35" y="-7.7" width="2.7" height="4" rx="0.6" transform="rotate(270)"/><rect x="-1.35" y="-7.7" width="2.7" height="4" rx="0.6" transform="rotate(315)"/><circle r="2.4" fill="#fcfcfc"/></g></svg></div>
<div class="lab" style="left:455.4px;top:181.8px">gkbd-keyboard-<br>display.desktop</div>
<div class="page" style="left:555.6px;top:143.8px"><svg class="abs" style="left:-0.8px;top:-0.8px" width="28" height="35" viewBox="0 0 28 35"><g transform="translate(14.2,17.4)" fill="#c6c6c6"><circle r="5.4"/><rect x="-1.35" y="-7.7" width="2.7" height="4" rx="0.6" transform="rotate(0)"/><rect x="-1.35" y="-7.7" width="2.7" height="4" rx="0.6" transform="rotate(45)"/><rect x="-1.35" y="-7.7" width="2.7" height="4" rx="0.6" transform="rotate(90)"/><rect x="-1.35" y="-7.7" width="2.7" height="4" rx="0.6" transform="rotate(135)"/><rect x="-1.35" y="-7.7" width="2.7" height="4" rx="0.6" transform="rotate(180)"/><rect x="-1.35" y="-7.7" width="2.7" height="4" rx="0.6" transform="rotate(225)"/><rect x="-1.35" y="-7.7" width="2.7" height="4" rx="0.6" transform="rotate(270)"/><rect x="-1.35" y="-7.7" width="2.7" height="4" rx="0.6" transform="rotate(315)"/><circle r="2.4" fill="#fcfcfc"/></g></svg></div>
<div class="lab" style="left:531.8px;top:181.8px">gnome-applications-<br>panel.desktop</div>
<div class="page" style="left:249.8px;top:203.4px"><svg class="abs" style="left:-0.8px;top:-0.8px" width="28" height="35" viewBox="0 0 28 35"><g transform="translate(14.2,17.4)" fill="#c6c6c6"><circle r="5.4"/><rect x="-1.35" y="-7.7" width="2.7" height="4" rx="0.6" transform="rotate(0)"/><rect x="-1.35" y="-7.7" width="2.7" height="4" rx="0.6" transform="rotate(45)"/><rect x="-1.35" y="-7.7" width="2.7" height="4" rx="0.6" transform="rotate(90)"/><rect x="-1.35" y="-7.7" width="2.7" height="4" rx="0.6" transform="rotate(135)"/><rect x="-1.35" y="-7.7" width="2.7" height="4" rx="0.6" transform="rotate(180)"/><rect x="-1.35" y="-7.7" width="2.7" height="4" rx="0.6" transform="rotate(225)"/><rect x="-1.35" y="-7.7" width="2.7" height="4" rx="0.6" transform="rotate(270)"/><rect x="-1.35" y="-7.7" width="2.7" height="4" rx="0.6" transform="rotate(315)"/><circle r="2.4" fill="#fcfcfc"/></g></svg></div>
<div class="lab" style="left:226.0px;top:241.4px">gnome-background-<br>panel.desktop</div>
<div class="page" style="left:326.2px;top:203.4px"><svg class="abs" style="left:-0.8px;top:-0.8px" width="28" height="35" viewBox="0 0 28 35"><g transform="translate(14.2,17.4)" fill="#c6c6c6"><circle r="5.4"/><rect x="-1.35" y="-7.7" width="2.7" height="4" rx="0.6" transform="rotate(0)"/><rect x="-1.35" y="-7.7" width="2.7" height="4" rx="0.6" transform="rotate(45)"/><rect x="-1.35" y="-7.7" width="2.7" height="4" rx="0.6" transform="rotate(90)"/><rect x="-1.35" y="-7.7" width="2.7" height="4" rx="0.6" transform="rotate(135)"/><rect x="-1.35" y="-7.7" width="2.7" height="4" rx="0.6" transform="rotate(180)"/><rect x="-1.35" y="-7.7" width="2.7" height="4" rx="0.6" transform="rotate(225)"/><rect x="-1.35" y="-7.7" width="2.7" height="4" rx="0.6" transform="rotate(270)"/><rect x="-1.35" y="-7.7" width="2.7" height="4" rx="0.6" transform="rotate(315)"/><circle r="2.4" fill="#fcfcfc"/></g></svg></div>
<div class="lab" style="left:302.4px;top:241.4px">gnome-bluetooth-<br>panel.desktop</div>
<div class="page" style="left:402.8px;top:203.4px"><svg class="abs" style="left:-0.8px;top:-0.8px" width="28" height="35" viewBox="0 0 28 35"><g transform="translate(14.2,17.4)" fill="#c6c6c6"><circle r="5.4"/><rect x="-1.35" y="-7.7" width="2.7" height="4" rx="0.6" transform="rotate(0)"/><rect x="-1.35" y="-7.7" width="2.7" height="4" rx="0.6" transform="rotate(45)"/><rect x="-1.35" y="-7.7" width="2.7" height="4" rx="0.6" transform="rotate(90)"/><rect x="-1.35" y="-7.7" width="2.7" height="4" rx="0.6" transform="rotate(135)"/><rect x="-1.35" y="-7.7" width="2.7" height="4" rx="0.6" transform="rotate(180)"/><rect x="-1.35" y="-7.7" width="2.7" height="4" rx="0.6" transform="rotate(225)"/><rect x="-1.35" y="-7.7" width="2.7" height="4" rx="0.6" transform="rotate(270)"/><rect x="-1.35" y="-7.7" width="2.7" height="4" rx="0.6" transform="rotate(315)"/><circle r="2.4" fill="#fcfcfc"/></g></svg></div>
<div class="lab" style="left:379.0px;top:241.4px">gnome-camera-<br>panel.desktop</div>
<div class="page" style="left:479.2px;top:203.4px"><svg class="abs" style="left:-0.8px;top:-0.8px" width="28" height="35" viewBox="0 0 28 35"><g transform="translate(14.2,17.4)" fill="#c6c6c6"><circle r="5.4"/><rect x="-1.35" y="-7.7" width="2.7" height="4" rx="0.6" transform="rotate(0)"/><rect x="-1.35" y="-7.7" width="2.7" height="4" rx="0.6" transform="rotate(45)"/><rect x="-1.35" y="-7.7" width="2.7" height="4" rx="0.6" transform="rotate(90)"/><rect x="-1.35" y="-7.7" width="2.7" height="4" rx="0.6" transform="rotate(135)"/><rect x="-1.35" y="-7.7" width="2.7" height="4" rx="0.6" transform="rotate(180)"/><rect x="-1.35" y="-7.7" width="2.7" height="4" rx="0.6" transform="rotate(225)"/><rect x="-1.35" y="-7.7" width="2.7" height="4" rx="0.6" transform="rotate(270)"/><rect x="-1.35" y="-7.7" width="2.7" height="4" rx="0.6" transform="rotate(315)"/><circle r="2.4" fill="#fcfcfc"/></g></svg></div>
<div class="lab" style="left:455.4px;top:241.4px">gnome-color-panel.<br>desktop</div>
<div class="page" style="left:555.6px;top:203.4px"><svg class="abs" style="left:-0.8px;top:-0.8px" width="28" height="35" viewBox="0 0 28 35"><g transform="translate(14.2,17.4)" fill="#c6c6c6"><circle r="5.4"/><rect x="-1.35" y="-7.7" width="2.7" height="4" rx="0.6" transform="rotate(0)"/><rect x="-1.35" y="-7.7" width="2.7" height="4" rx="0.6" transform="rotate(45)"/><rect x="-1.35" y="-7.7" width="2.7" height="4" rx="0.6" transform="rotate(90)"/><rect x="-1.35" y="-7.7" width="2.7" height="4" rx="0.6" transform="rotate(135)"/><rect x="-1.35" y="-7.7" width="2.7" height="4" rx="0.6" transform="rotate(180)"/><rect x="-1.35" y="-7.7" width="2.7" height="4" rx="0.6" transform="rotate(225)"/><rect x="-1.35" y="-7.7" width="2.7" height="4" rx="0.6" transform="rotate(270)"/><rect x="-1.35" y="-7.7" width="2.7" height="4" rx="0.6" transform="rotate(315)"/><circle r="2.4" fill="#fcfcfc"/></g></svg></div>
<div class="lab" style="left:531.8px;top:241.4px">gnome-connectivity-<br>panel.desktop</div>
<div class="page" style="left:249.8px;top:263.8px"><svg class="abs" style="left:-0.8px;top:-0.8px" width="28" height="35" viewBox="0 0 28 35"><g transform="translate(14.2,17.4)" fill="#c6c6c6"><circle r="5.4"/><rect x="-1.35" y="-7.7" width="2.7" height="4" rx="0.6" transform="rotate(0)"/><rect x="-1.35" y="-7.7" width="2.7" height="4" rx="0.6" transform="rotate(45)"/><rect x="-1.35" y="-7.7" width="2.7" height="4" rx="0.6" transform="rotate(90)"/><rect x="-1.35" y="-7.7" width="2.7" height="4" rx="0.6" transform="rotate(135)"/><rect x="-1.35" y="-7.7" width="2.7" height="4" rx="0.6" transform="rotate(180)"/><rect x="-1.35" y="-7.7" width="2.7" height="4" rx="0.6" transform="rotate(225)"/><rect x="-1.35" y="-7.7" width="2.7" height="4" rx="0.6" transform="rotate(270)"/><rect x="-1.35" y="-7.7" width="2.7" height="4" rx="0.6" transform="rotate(315)"/><circle r="2.4" fill="#fcfcfc"/></g></svg></div>
<div class="lab" style="left:226.0px;top:301.8px">gnome-control-<br>center.desktop</div>
<div class="page" style="left:326.2px;top:263.8px"><svg class="abs" style="left:-0.8px;top:-0.8px" width="28" height="35" viewBox="0 0 28 35"><g transform="translate(14.2,17.4)" fill="#c6c6c6"><circle r="5.4"/><rect x="-1.35" y="-7.7" width="2.7" height="4" rx="0.6" transform="rotate(0)"/><rect x="-1.35" y="-7.7" width="2.7" height="4" rx="0.6" transform="rotate(45)"/><rect x="-1.35" y="-7.7" width="2.7" height="4" rx="0.6" transform="rotate(90)"/><rect x="-1.35" y="-7.7" width="2.7" height="4" rx="0.6" transform="rotate(135)"/><rect x="-1.35" y="-7.7" width="2.7" height="4" rx="0.6" transform="rotate(180)"/><rect x="-1.35" y="-7.7" width="2.7" height="4" rx="0.6" transform="rotate(225)"/><rect x="-1.35" y="-7.7" width="2.7" height="4" rx="0.6" transform="rotate(270)"/><rect x="-1.35" y="-7.7" width="2.7" height="4" rx="0.6" transform="rotate(315)"/><circle r="2.4" fill="#fcfcfc"/></g></svg></div>
<div class="lab" style="left:302.4px;top:301.8px">gnome-datetime-<br>panel.desktop</div>
<div class="page" style="left:402.8px;top:263.8px"><svg class="abs" style="left:-0.8px;top:-0.8px" width="28" height="35" viewBox="0 0 28 35"><g transform="translate(14.2,17.4)" fill="#c6c6c6"><circle r="5.4"/><rect x="-1.35" y="-7.7" width="2.7" height="4" rx="0.6" transform="rotate(0)"/><rect x="-1.35" y="-7.7" width="2.7" height="4" rx="0.6" transform="rotate(45)"/><rect x="-1.35" y="-7.7" width="2.7" height="4" rx="0.6" transform="rotate(90)"/><rect x="-1.35" y="-7.7" width="2.7" height="4" rx="0.6" transform="rotate(135)"/><rect x="-1.35" y="-7.7" width="2.7" height="4" rx="0.6" transform="rotate(180)"/><rect x="-1.35" y="-7.7" width="2.7" height="4" rx="0.6" transform="rotate(225)"/><rect x="-1.35" y="-7.7" width="2.7" height="4" rx="0.6" transform="rotate(270)"/><rect x="-1.35" y="-7.7" width="2.7" height="4" rx="0.6" transform="rotate(315)"/><circle r="2.4" fill="#fcfcfc"/></g></svg></div>
<div class="lab" style="left:379.0px;top:301.8px">gnome-default-apps-<br>panel.desktop</div>
<div class="page" style="left:479.2px;top:263.8px"><svg class="abs" style="left:-0.8px;top:-0.8px" width="28" height="35" viewBox="0 0 28 35"><g transform="translate(14.2,17.4)" fill="#c6c6c6"><circle r="5.4"/><rect x="-1.35" y="-7.7" width="2.7" height="4" rx="0.6" transform="rotate(0)"/><rect x="-1.35" y="-7.7" width="2.7" height="4" rx="0.6" transform="rotate(45)"/><rect x="-1.35" y="-7.7" width="2.7" height="4" rx="0.6" transform="rotate(90)"/><rect x="-1.35" y="-7.7" width="2.7" height="4" rx="0.6" transform="rotate(135)"/><rect x="-1.35" y="-7.7" width="2.7" height="4" rx="0.6" transform="rotate(180)"/><rect x="-1.35" y="-7.7" width="2.7" height="4" rx="0.6" transform="rotate(225)"/><rect x="-1.35" y="-7.7" width="2.7" height="4" rx="0.6" transform="rotate(270)"/><rect x="-1.35" y="-7.7" width="2.7" height="4" rx="0.6" transform="rotate(315)"/><circle r="2.4" fill="#fcfcfc"/></g></svg></div>
<div class="lab" style="left:455.4px;top:301.8px">gnome-diagnostics-<br>panel.desktop</div>
<div class="page" style="left:555.6px;top:263.8px"><svg class="abs" style="left:-0.8px;top:-0.8px" width="28" height="35" viewBox="0 0 28 35"><g transform="translate(14.2,17.4)" fill="#c6c6c6"><circle r="5.4"/><rect x="-1.35" y="-7.7" width="2.7" height="4" rx="0.6" transform="rotate(0)"/><rect x="-1.35" y="-7.7" width="2.7" height="4" rx="0.6" transform="rotate(45)"/><rect x="-1.35" y="-7.7" width="2.7" height="4" rx="0.6" transform="rotate(90)"/><rect x="-1.35" y="-7.7" width="2.7" height="4" rx="0.6" transform="rotate(135)"/><rect x="-1.35" y="-7.7" width="2.7" height="4" rx="0.6" transform="rotate(180)"/><rect x="-1.35" y="-7.7" width="2.7" height="4" rx="0.6" transform="rotate(225)"/><rect x="-1.35" y="-7.7" width="2.7" height="4" rx="0.6" transform="rotate(270)"/><rect x="-1.35" y="-7.7" width="2.7" height="4" rx="0.6" transform="rotate(315)"/><circle r="2.4" fill="#fcfcfc"/></g></svg></div>
<div class="lab" style="left:531.8px;top:301.8px">gnome-disk-image-<br>mounter.desktop</div>
<div class="page" style="left:249.8px;top:323.4px"><svg class="abs" style="left:-0.8px;top:-0.8px" width="28" height="35" viewBox="0 0 28 35"><g transform="translate(14.2,17.4)" fill="#c6c6c6"><circle r="5.4"/><rect x="-1.35" y="-7.7" width="2.7" height="4" rx="0.6" transform="rotate(0)"/><rect x="-1.35" y="-7.7" width="2.7" height="4" rx="0.6" transform="rotate(45)"/><rect x="-1.35" y="-7.7" width="2.7" height="4" rx="0.6" transform="rotate(90)"/><rect x="-1.35" y="-7.7" width="2.7" height="4" rx="0.6" transform="rotate(135)"/><rect x="-1.35" y="-7.7" width="2.7" height="4" rx="0.6" transform="rotate(180)"/><rect x="-1.35" y="-7.7" width="2.7" height="4" rx="0.6" transform="rotate(225)"/><rect x="-1.35" y="-7.7" width="2.7" height="4" rx="0.6" transform="rotate(270)"/><rect x="-1.35" y="-7.7" width="2.7" height="4" rx="0.6" transform="rotate(315)"/><circle r="2.4" fill="#fcfcfc"/></g></svg></div>
<div class="lab" style="left:226.0px;top:361.4px">gnome-disk-image-<br>writer.desktop</div>
<div class="page" style="left:326.2px;top:323.4px"><svg class="abs" style="left:-0.8px;top:-0.8px" width="28" height="35" viewBox="0 0 28 35"><g transform="translate(14.2,17.4)" fill="#c6c6c6"><circle r="5.4"/><rect x="-1.35" y="-7.7" width="2.7" height="4" rx="0.6" transform="rotate(0)"/><rect x="-1.35" y="-7.7" width="2.7" height="4" rx="0.6" transform="rotate(45)"/><rect x="-1.35" y="-7.7" width="2.7" height="4" rx="0.6" transform="rotate(90)"/><rect x="-1.35" y="-7.7" width="2.7" height="4" rx="0.6" transform="rotate(135)"/><rect x="-1.35" y="-7.7" width="2.7" height="4" rx="0.6" transform="rotate(180)"/><rect x="-1.35" y="-7.7" width="2.7" height="4" rx="0.6" transform="rotate(225)"/><rect x="-1.35" y="-7.7" width="2.7" height="4" rx="0.6" transform="rotate(270)"/><rect x="-1.35" y="-7.7" width="2.7" height="4" rx="0.6" transform="rotate(315)"/><circle r="2.4" fill="#fcfcfc"/></g></svg></div>
<div class="lab" style="left:302.4px;top:361.4px">gnome-display-<br>panel.desktop</div>
<div class="page" style="left:402.8px;top:323.4px"><svg class="abs" style="left:-0.8px;top:-0.8px" width="28" height="35" viewBox="0 0 28 35"><g transform="translate(14.2,17.4)" fill="#c6c6c6"><circle r="5.4"/><rect x="-1.35" y="-7.7" width="2.7" height="4" rx="0.6" transform="rotate(0)"/><rect x="-1.35" y="-7.7" width="2.7" height="4" rx="0.6" transform="rotate(45)"/><rect x="-1.35" y="-7.7" width="2.7" height="4" rx="0.6" transform="rotate(90)"/><rect x="-1.35" y="-7.7" width="2.7" height="4" rx="0.6" transform="rotate(135)"/><rect x="-1.35" y="-7.7" width="2.7" height="4" rx="0.6" transform="rotate(180)"/><rect x="-1.35" y="-7.7" width="2.7" height="4" rx="0.6" transform="rotate(225)"/><rect x="-1.35" y="-7.7" width="2.7" height="4" rx="0.6" transform="rotate(270)"/><rect x="-1.35" y="-7.7" width="2.7" height="4" rx="0.6" transform="rotate(315)"/><circle r="2.4" fill="#fcfcfc"/></g></svg></div>
<div class="lab" style="left:379.0px;top:361.4px">gnome-flashback.<br>desktop</div>
<div class="page" style="left:479.2px;top:323.4px"><svg class="abs" style="left:-0.8px;top:-0.8px" width="28" height="35" viewBox="0 0 28 35"><g transform="translate(14.2,17.4)" fill="#c6c6c6"><circle r="5.4"/><rect x="-1.35" y="-7.7" width="2.7" height="4" rx="0.6" transform="rotate(0)"/><rect x="-1.35" y="-7.7" width="2.7" height="4" rx="0.6" transform="rotate(45)"/><rect x="-1.35" y="-7.7" width="2.7" height="4" rx="0.6" transform="rotate(90)"/><rect x="-1.35" y="-7.7" width="2.7" height="4" rx="0.6" transform="rotate(135)"/><rect x="-1.35" y="-7.7" width="2.7" height="4" rx="0.6" transform="rotate(180)"/><rect x="-1.35" y="-7.7" width="2.7" height="4" rx="0.6" transform="rotate(225)"/><rect x="-1.35" y="-7.7" width="2.7" height="4" rx="0.6" transform="rotate(270)"/><rect x="-1.35" y="-7.7" width="2.7" height="4" rx="0.6" transform="rotate(315)"/><circle r="2.4" fill="#fcfcfc"/></g></svg></div>
<div class="lab" style="left:455.4px;top:361.4px">gnome-info-<br>overview-panel.<br>desktop</div>
<div class="page" style="left:555.6px;top:323.4px"><svg class="abs" style="left:-0.8px;top:-0.8px" width="28" height="35" viewBox="0 0 28 35"><g transform="translate(14.2,17.4)" fill="#c6c6c6"><circle r="5.4"/><rect x="-1.35" y="-7.7" width="2.7" height="4" rx="0.6" transform="rotate(0)"/><rect x="-1.35" y="-7.7" width="2.7" height="4" rx="0.6" transform="rotate(45)"/><rect x="-1.35" y="-7.7" width="2.7" height="4" rx="0.6" transform="rotate(90)"/><rect x="-1.35" y="-7.7" width="2.7" height="4" rx="0.6" transform="rotate(135)"/><rect x="-1.35" y="-7.7" width="2.7" height="4" rx="0.6" transform="rotate(180)"/><rect x="-1.35" y="-7.7" width="2.7" height="4" rx="0.6" transform="rotate(225)"/><rect x="-1.35" y="-7.7" width="2.7" height="4" rx="0.6" transform="rotate(270)"/><rect x="-1.35" y="-7.7" width="2.7" height="4" rx="0.6" transform="rotate(315)"/><circle r="2.4" fill="#fcfcfc"/></g></svg></div>
<div class="abs" style="left:570.9px;top:342.6px;width:17.4px;height:17.4px;border-radius:50%;background:#923e64;"><svg class="abs" style="left:0;top:0" width="17.4" height="17.4" viewBox="0 0 17.4 17.4"><path d="M5 12.4 L11.5 5.9" stroke="#f0dde7" stroke-width="1.2" fill="none"/><path d="M8.2 5 H12.4 V9.2 Z" fill="#f0dde7"/></svg></div>
<div class="lab" style="left:531.8px;top:361.4px">gnome-initial-setup.<br>desktop</div>
<div class="page" style="left:249.8px;top:390.6px"><svg class="abs" style="left:-0.8px;top:-0.8px" width="28" height="35" viewBox="0 0 28 35"><g transform="translate(14.2,17.4)" fill="#c6c6c6"><circle r="5.4"/><rect x="-1.35" y="-7.7" width="2.7" height="4" rx="0.6" transform="rotate(0)"/><rect x="-1.35" y="-7.7" width="2.7" height="4" rx="0.6" transform="rotate(45)"/><rect x="-1.35" y="-7.7" width="2.7" height="4" rx="0.6" transform="rotate(90)"/><rect x="-1.35" y="-7.7" width="2.7" height="4" rx="0.6" transform="rotate(135)"/><rect x="-1.35" y="-7.7" width="2.7" height="4" rx="0.6" transform="rotate(180)"/><rect x="-1.35" y="-7.7" width="2.7" height="4" rx="0.6" transform="rotate(225)"/><rect x="-1.35" y="-7.7" width="2.7" height="4" rx="0.6" transform="rotate(270)"/><rect x="-1.35" y="-7.7" width="2.7" height="4" rx="0.6" transform="rotate(315)"/><circle r="2.4" fill="#fcfcfc"/></g></svg></div>
<div class="page" style="left:326.2px;top:390.6px"><svg class="abs" style="left:-0.8px;top:-0.8px" width="28" height="35" viewBox="0 0 28 35"><g transform="translate(14.2,17.4)" fill="#c6c6c6"><circle r="5.4"/><rect x="-1.35" y="-7.7" width="2.7" height="4" rx="0.6" transform="rotate(0)"/><rect x="-1.35" y="-7.7" width="2.7" height="4" rx="0.6" transform="rotate(45)"/><rect x="-1.35" y="-7.7" width="2.7" height="4" rx="0.6" transform="rotate(90)"/><rect x="-1.35" y="-7.7" width="2.7" height="4" rx="0.6" transform="rotate(135)"/><rect x="-1.35" y="-7.7" width="2.7" height="4" rx="0.6" transform="rotate(180)"/><rect x="-1.35" y="-7.7" width="2.7" height="4" rx="0.6" transform="rotate(225)"/><rect x="-1.35" y="-7.7" width="2.7" height="4" rx="0.6" transform="rotate(270)"/><rect x="-1.35" y="-7.7" width="2.7" height="4" rx="0.6" transform="rotate(315)"/><circle r="2.4" fill="#fcfcfc"/></g></svg></div>
<div class="page" style="left:402.8px;top:390.6px"><svg class="abs" style="left:-0.8px;top:-0.8px" width="28" height="35" viewBox="0 0 28 35"><g transform="translate(14.2,17.4)" fill="#c6c6c6"><circle r="5.4"/><rect x="-1.35" y="-7.7" width="2.7" height="4" rx="0.6" transform="rotate(0)"/><rect x="-1.35" y="-7.7" width="2.7" height="4" rx="0.6" transform="rotate(45)"/><rect x="-1.35" y="-7.7" width="2.7" height="4" rx="0.6" transform="rotate(90)"/><rect x="-1.35" y="-7.7" width="2.7" height="4" rx="0.6" transform="rotate(135)"/><rect x="-1.35" y="-7.7" width="2.7" height="4" rx="0.6" transform="rotate(180)"/><rect x="-1.35" y="-7.7" width="2.7" height="4" rx="0.6" transform="rotate(225)"/><rect x="-1.35" y="-7.7" width="2.7" height="4" rx="0.6" transform="rotate(270)"/><rect x="-1.35" y="-7.7" width="2.7" height="4" rx="0.6" transform="rotate(315)"/><circle r="2.4" fill="#fcfcfc"/></g></svg></div>
<div class="page" style="left:479.2px;top:390.6px"><svg class="abs" style="left:-0.8px;top:-0.8px" width="28" height="35" viewBox="0 0 28 35"><g transform="translate(14.2,17.4)" fill="#c6c6c6"><circle r="5.4"/><rect x="-1.35" y="-7.7" width="2.7" height="4" rx="0.6" transform="rotate(0)"/><rect x="-1.35" y="-7.7" width="2.7" height="4" rx="0.6" transform="rotate(45)"/><rect x="-1.35" y="-7.7" width="2.7" height="4" rx="0.6" transform="rotate(90)"/><rect x="-1.35" y="-7.7" width="2.7" height="4" rx="0.6" transform="rotate(135)"/><rect x="-1.35" y="-7.7" width="2.7" height="4" rx="0.6" transform="rotate(180)"/><rect x="-1.35" y="-7.7" width="2.7" height="4" rx="0.6" transform="rotate(225)"/><rect x="-1.35" y="-7.7" width="2.7" height="4" rx="0.6" transform="rotate(270)"/><rect x="-1.35" y="-7.7" width="2.7" height="4" rx="0.6" transform="rotate(315)"/><circle r="2.4" fill="#fcfcfc"/></g></svg></div>
<div class="page" style="left:555.6px;top:390.6px"><svg class="abs" style="left:-0.8px;top:-0.8px" width="28" height="35" viewBox="0 0 28 35"><g transform="translate(14.2,17.4)" fill="#c6c6c6"><circle r="5.4"/><rect x="-1.35" y="-7.7" width="2.7" height="4" rx="0.6" transform="rotate(0)"/><rect x="-1.35" y="-7.7" width="2.7" height="4" rx="0.6" transform="rotate(45)"/><rect x="-1.35" y="-7.7" width="2.7" height="4" rx="0.6" transform="rotate(90)"/><rect x="-1.35" y="-7.7" width="2.7" height="4" rx="0.6" transform="rotate(135)"/><rect x="-1.35" y="-7.7" width="2.7" height="4" rx="0.6" transform="rotate(180)"/><rect x="-1.35" y="-7.7" width="2.7" height="4" rx="0.6" transform="rotate(225)"/><rect x="-1.35" y="-7.7" width="2.7" height="4" rx="0.6" transform="rotate(270)"/><rect x="-1.35" y="-7.7" width="2.7" height="4" rx="0.6" transform="rotate(315)"/><circle r="2.4" fill="#fcfcfc"/></g></svg></div>
</div>
</body></html>
